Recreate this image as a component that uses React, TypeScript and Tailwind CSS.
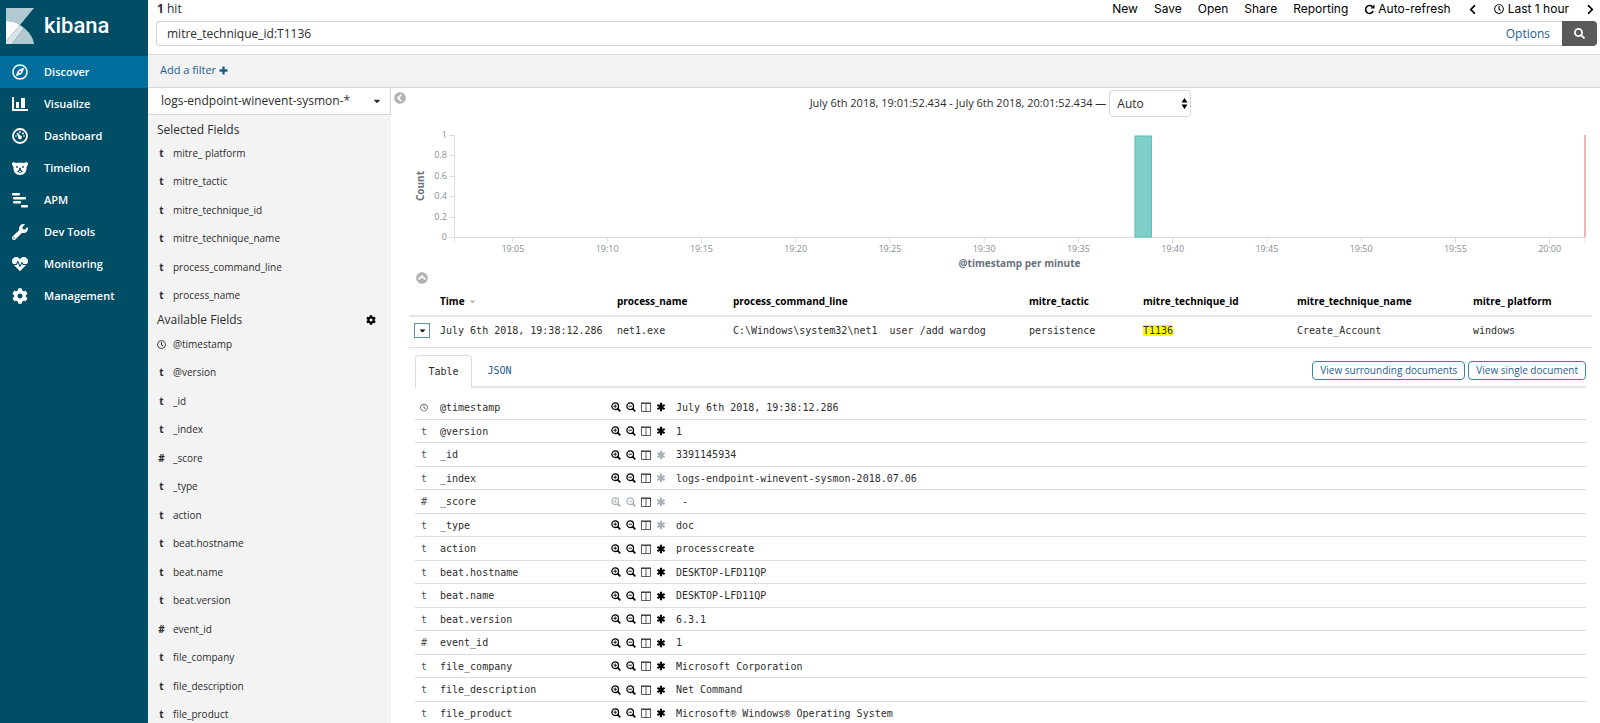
import { useState } from "react";
import type { ReactNode } from "react";
import {
  FaCaretDown,
  FaChevronCircleLeft,
  FaChevronCircleUp,
  FaChevronLeft,
  FaChevronRight,
  FaCog,
  FaHeartbeat,
  FaRegClock,
  FaRegCompass,
  FaSearch,
  FaWrench,
} from "react-icons/fa";

type Field = { type: string; name: string };
type DocRow = Field & { value: string; meta?: boolean; noFilter?: boolean };

const selectedFields: Field[] = [
  { type: "t", name: "mitre_ platform" },
  { type: "t", name: "mitre_tactic" },
  { type: "t", name: "mitre_technique_id" },
  { type: "t", name: "mitre_technique_name" },
  { type: "t", name: "process_command_line" },
  { type: "t", name: "process_name" },
];

const docRows: DocRow[] = [
  { type: "date", name: "@timestamp", value: "July 6th 2018, 19:38:12.286" },
  { type: "t", name: "@version", value: "1" },
  { type: "t", name: "_id", value: "3391145934", meta: true },
  { type: "t", name: "_index", value: "logs-endpoint-winevent-sysmon-2018.07.06", meta: true },
  { type: "#", name: "_score", value: " -", meta: true, noFilter: true },
  { type: "t", name: "_type", value: "doc", meta: true },
  { type: "t", name: "action", value: "processcreate" },
  { type: "t", name: "beat.hostname", value: "DESKTOP-LFD11QP" },
  { type: "t", name: "beat.name", value: "DESKTOP-LFD11QP" },
  { type: "t", name: "beat.version", value: "6.3.1" },
  { type: "#", name: "event_id", value: "1" },
  { type: "t", name: "file_company", value: "Microsoft Corporation" },
  { type: "t", name: "file_description", value: "Net Command" },
  { type: "t", name: "file_product", value: "Microsoft® Windows® Operating System" },
];

// chart range in minutes after 19:00
const RANGE_START = 1.874;
const RANGE_LENGTH = 60;
const xPos = (minute: number) => `${((minute - RANGE_START) / RANGE_LENGTH) * 100}%`;

const xTicks = [
  { minute: 5, label: "19:05" },
  { minute: 10, label: "19:10" },
  { minute: 15, label: "19:15" },
  { minute: 20, label: "19:20" },
  { minute: 25, label: "19:25" },
  { minute: 30, label: "19:30" },
  { minute: 35, label: "19:35" },
  { minute: 40, label: "19:40" },
  { minute: 45, label: "19:45" },
  { minute: 50, label: "19:50" },
  { minute: 55, label: "19:55" },
  { minute: 60, label: "20:00" },
];

const yTicks = [
  { y: 8, label: "1" },
  { y: 28, label: "0.8" },
  { y: 49, label: "0.6" },
  { y: 69, label: "0.4" },
  { y: 90, label: "0.2" },
  { y: 110, label: "0" },
];

function KibanaLogo() {
  return (
    <svg width="28" height="36" viewBox="0 0 28 36" aria-hidden="true">
      <path d="M0 0H28L14 17C10 14 5 13 0 13Z" fill="#b2c9d1" />
      <path d="M0 13C5 13 10 14 14 17L0 33Z" fill="#fff" />
      <path d="M14 17L18 20L6 36H0V33Z" fill="#d9e4e8" />
      <path d="M18 20C23 24 27 29 28 36H6Z" fill="#b2c9d1" />
    </svg>
  );
}

function BarsIcon() {
  return (
    <svg width="16" height="15" viewBox="0 0 16 15" fill="currentColor" aria-hidden="true">
      <path d="M0 0H2V12H16V14H0Z" />
      <path d="M4 5H7V11H4ZM9 1H13V11H9Z" />
    </svg>
  );
}

function GaugeIcon() {
  return (
    <svg width="16" height="16" viewBox="0 0 16 16" aria-hidden="true">
      <circle cx="8" cy="8" r="7" fill="none" stroke="currentColor" strokeWidth="1.800" />
      <g fill="currentColor">
        <circle cx="8" cy="9.500" r="1.900" />
        <path d="M4.500 5.500L6 4.500L9 9L7 10Z" />
        <circle cx="8" cy="4" r=".9" />
        <circle cx="11" cy="5.500" r="1" />
        <circle cx="4" cy="8" r=".8" />
        <circle cx="12" cy="8" r=".8" />
      </g>
    </svg>
  );
}

function BearIcon() {
  return (
    <svg width="16" height="13" viewBox="0 0 16 13" aria-hidden="true">
      <path
        d="M0 2C0 0 2 0 4 1C6 .5 10 .5 12 1C14 0 16 0 16 2C16 3 15 4 14.500 5C15 10 12 13 8 13C4 13 1 10 1.500 5C1 4 0 3 0 2Z"
        fill="currentColor"
      />
      <g fill="#004d66">
        <circle cx="5" cy="5" r=".9" />
        <circle cx="11" cy="5" r=".9" />
        <path d="M8 5.500C9 5.500 9 7 9 8L11 9.500C10 11 6 11 5 9.500L7 8C7 7 7 5.500 8 5.500Z" />
      </g>
      <rect x="7" y="9" width="2" height="1" fill="currentColor" />
    </svg>
  );
}

function ApmIcon() {
  return (
    <svg width="16" height="15" viewBox="0 0 16 15" fill="currentColor" aria-hidden="true">
      <rect x="0" y="0" width="8" height="2.400" rx="1" />
      <rect x="1" y="4" width="13" height="2.400" rx="1" />
      <rect x="1" y="8" width="8" height="2.400" rx="1" />
      <rect x="9" y="12" width="7" height="2.400" rx="1" />
    </svg>
  );
}

function RepeatIcon() {
  return (
    <svg width="11" height="11" viewBox="0 0 11 11" aria-hidden="true">
      <path d="M8.500 2.700A4 4 0 1 0 9.200 7.200" fill="none" stroke="currentColor" strokeWidth="1.600" />
      <path d="M10.500 .5V4.500H6.500Z" fill="currentColor" />
    </svg>
  );
}

function PlusIcon() {
  return (
    <svg width="9" height="9" viewBox="0 0 9 9" aria-hidden="true">
      <path d="M4.500 .5V8.500M.5 4.500H8.500" stroke="currentColor" strokeWidth="2.400" />
    </svg>
  );
}

function AsteriskIcon() {
  return (
    <svg width="10" height="10" viewBox="0 0 10 10" aria-hidden="true">
      <path
        d="M5 .8V9.200M1.400 2.900L8.600 7.100M8.600 2.900L1.400 7.100"
        stroke="currentColor"
        strokeWidth="2.200"
      />
    </svg>
  );
}

function ZoomIcon({ plus }: { plus?: boolean }) {
  return (
    <svg width="10" height="10" viewBox="0 0 10 10" fill="none" stroke="currentColor" aria-hidden="true">
      <circle cx="4.200" cy="4.200" r="3.300" strokeWidth="1.300" />
      <path d="M6.600 6.600L9.300 9.300" strokeWidth="1.700" />
      <path d={plus ? "M2.500 4.200H5.900M4.200 2.500V5.900" : "M2.500 4.200H5.900"} strokeWidth=".9" />
    </svg>
  );
}

function ColumnsIcon() {
  return (
    <svg width="10" height="10" viewBox="0 0 10 10" fill="none" stroke="currentColor" aria-hidden="true">
      <path d="M.5 1V9.500H9.500V1M5 1V9.500" strokeWidth=".8" />
      <path d="M0 1.200H10" strokeWidth="1.400" />
    </svg>
  );
}

const navItems: { label: string; icon: ReactNode }[] = [
  { label: "Discover", icon: <FaRegCompass size={16} /> },
  { label: "Visualize", icon: <BarsIcon /> },
  { label: "Dashboard", icon: <GaugeIcon /> },
  { label: "Timelion", icon: <BearIcon /> },
  { label: "APM", icon: <ApmIcon /> },
  { label: "Dev Tools", icon: <FaWrench size={16} /> },
  { label: "Monitoring", icon: <FaHeartbeat size={16} /> },
  { label: "Management", icon: <FaCog size={16} /> },
];

function SideNav() {
  return (
    <nav className="w-[148px] shrink-0 bg-[#004d66] text-white">
      <a href="#home" className="flex h-14 items-center gap-[10px] pl-[6px] pb-1">
        <KibanaLogo />
        <span className="font-[Roboto,sans-serif] text-[22px] leading-6 font-medium">kibana</span>
      </a>
      <ul>
        {navItems.map((item, i) => (
          <li key={item.label}>
            <a
              href={`#${item.label}`}
              className={`flex h-8 items-center pl-3 text-[11px] font-semibold ${i === 0 ? "bg-[#006e9c]" : ""}`}
            >
              <span className="w-8">{item.icon}</span>
              {item.label}
            </a>
          </li>
        ))}
      </ul>
    </nav>
  );
}

function TopBar() {
  const [query, setQuery] = useState("mitre_technique_id:T1136");

  return (
    <header className="border-b border-[#d9d9d9] pb-2">
      <div className="flex h-[21px] items-center justify-between pb-[3px] pl-[9px] pr-1">
        <div className="text-xs">
          <strong>1</strong> hit
        </div>
        <div className="flex items-center gap-4 font-[Inter,sans-serif] text-xs leading-4 text-black">
          <button>New</button>
          <button>Save</button>
          <button>Open</button>
          <button>Share</button>
          <button>Reporting</button>
          <button className="flex items-center gap-[3px]">
            <RepeatIcon />
            Auto-refresh
          </button>
          <button aria-label="Previous period">
            <FaChevronLeft size={11} />
          </button>
          <button className="flex items-center gap-1">
            <FaRegClock size={10} />
            Last 1 hour
          </button>
          <button aria-label="Next period">
            <FaChevronRight size={11} />
          </button>
        </div>
      </div>
      <form className="flex h-[25px] pl-2 pr-[3px]" onSubmit={(e) => e.preventDefault()}>
        <div className="flex flex-1 items-center rounded-l border border-r-0 border-[#d4d4d4] pr-3">
          <input
            type="text"
            aria-label="Search query"
            value={query}
            onChange={(e) => setQuery(e.target.value)}
            className="min-w-0 flex-1 pl-[10px] text-xs text-[#2d2d2d] outline-none"
          />
          <a href="#options" className="text-xs text-[#1f5d8f]">
            Options
          </a>
        </div>
        <button
          aria-label="Search"
          className="flex w-[35px] items-center justify-center rounded-r bg-[#5a5a5a] text-white"
        >
          <FaSearch size={11} />
        </button>
      </form>
    </header>
  );
}

function FieldIcon({ type }: { type: string }) {
  return type === "date" ? <FaRegClock size={9} /> : <>{type}</>;
}

function FieldList({ fields }: { fields: Field[] }) {
  return (
    <ul className="text-[10px] text-[#2d2d2d]">
      {fields.map((field) => (
        <li key={field.name} className="flex items-center odd:h-7 even:h-[29px]">
          <span className="flex w-[9px] justify-center font-bold">
            <FieldIcon type={field.type} />
          </span>
          <span className="pl-[7px]">{field.name}</span>
        </li>
      ))}
    </ul>
  );
}

function FieldsPanel() {
  return (
    <aside className="w-[243px] shrink-0 bg-[#f3f3f3]">
      <button className="flex h-[27px] w-full items-center justify-between border-r border-b border-[#d4d4d4] bg-white pl-[13px] pr-2 text-xs">
        logs-endpoint-winevent-sysmon-*
        <FaCaretDown size={10} />
      </button>
      <div className="pl-[9px] pt-[5px]">
        <h2 className="h-[19px] text-xs leading-5">Selected Fields</h2>
        <FieldList fields={selectedFields} />
        <div className="flex h-5 items-center justify-between pr-[15px]">
          <h2 className="text-xs">Available Fields</h2>
          <button aria-label="Field settings" className="text-black">
            <FaCog size={10} />
          </button>
        </div>
        <FieldList fields={docRows} />
      </div>
    </aside>
  );
}

function Histogram() {
  return (
    <div className="flex h-[145px] pr-[7px] font-['Open_Sans',sans-serif]">
      <svg className="h-full w-[45px] shrink-0" aria-hidden="true">
        <text x="15" y="59" transform="rotate(-90 15 59)" textAnchor="middle" className="fill-[#69707d] text-[10px] font-bold">
          Count
        </text>
        {yTicks.map((tick) => (
          <g key={tick.label}>
            <text x="38" y={tick.y + 3} textAnchor="end" className="fill-[#848e96] text-[9px]">
              {tick.label}
            </text>
            <path d={`M40 ${tick.y}.5H45`} stroke="#ddd" />
          </g>
        ))}
      </svg>
      <svg className="h-full min-w-0 flex-1 overflow-visible" role="img" aria-label="Count by @timestamp per minute">
        <path d="M.5 8V116" stroke="#ddd" />
        <line x1="0" x2="100%" y1="110.5" y2="110.5" stroke="#ddd" />
        <line x1="100%" x2="100%" y1="110" y2="116" stroke="#ddd" />
        {xTicks.map((tick) => (
          <g key={tick.minute}>
            <line x1={xPos(tick.minute)} x2={xPos(tick.minute)} y1="110" y2="116" stroke="#ddd" />
            <text x={xPos(tick.minute)} y="125" textAnchor="middle" className="fill-[#848e96] text-[9px]">
              {tick.label}
            </text>
          </g>
        ))}
        <rect x={xPos(38)} y="9" width="1.45%" height="101" fill="#80cfc9" stroke="#4dbfb6" />
        <line x1="100%" x2="100%" y1="8" y2="110" stroke="#f3b6b6" strokeWidth="2" />
        <text x="50%" y="140" textAnchor="middle" className="fill-[#69707d] text-[10px] font-bold">
          @timestamp per minute
        </text>
      </svg>
    </div>
  );
}

function DocTable() {
  return (
    <table className="w-full table-fixed text-left">
      <colgroup>
        <col className="w-[31px]" />
        <col className="w-[177px]" />
        <col className="w-[116px]" />
        <col />
        <col className="w-[114px]" />
        <col className="w-[154px]" />
        <col className="w-[176px]" />
        <col className="w-[119px]" />
      </colgroup>
      <thead>
        <tr className="h-7 border-b-2 border-[#e6e6e6] text-[10px] text-black">
          <th aria-label="Toggle" />
          <th>
            <span className="flex items-center gap-[3px]">
              Time <FaCaretDown size={9} className="text-[#b0b8be]" />
            </span>
          </th>
          <th>process_name</th>
          <th>process_command_line</th>
          <th>mitre_tactic</th>
          <th>mitre_technique_id</th>
          <th>mitre_technique_name</th>
          <th>mitre_ platform</th>
        </tr>
      </thead>
      <tbody>
        <tr className="h-[31px] border-b border-[#dcdcdc] font-['DejaVu_Sans_Mono',monospace] text-[10px] text-[#2d2d2d] *:pb-[3px]">
          <td className="pl-[5px]">
            <button
              aria-label="Toggle row details"
              className="flex h-[15px] w-4 items-center justify-center border border-[#5a8db5] text-black"
            >
              <FaCaretDown size={9} />
            </button>
          </td>
          <td>July 6th 2018, 19:38:12.286</td>
          <td>net1.exe</td>
          <td className="whitespace-pre">{"C:\\Windows\\system32\\net1  user /add wardog"}</td>
          <td>persistence</td>
          <td>
            <mark className="bg-[#ff0] text-[#2d2d2d]">T1136</mark>
          </td>
          <td>Create_Account</td>
          <td>windows</td>
        </tr>
      </tbody>
    </table>
  );
}

function DocDetails() {
  return (
    <section className="pl-[6px] pr-[6px] pt-[7px] font-['DejaVu_Sans_Mono',monospace] text-[10px]">
      <div className="flex h-[33px] justify-between border-b-2 border-[#e6e6e6]">
        <div className="flex" role="tablist">
          <button
            role="tab"
            aria-selected="true"
            className="-mb-[2px] w-[57px] rounded-t border border-b-0 border-[#dcdcdc] bg-white"
          >
            Table
          </button>
          <button role="tab" aria-selected="false" className="w-[55px] text-[#1f5d8f]">
            JSON
          </button>
        </div>
        <div className="flex items-center gap-[3px] font-['Open_Sans',sans-serif] text-[10px] text-[#1f5d8f]">
          <a href="#surrounding" className="rounded border border-[#3c82a8] px-[7px] leading-[17px]">
            View surrounding documents
          </a>
          <a href="#single" className="rounded border border-[#3c82a8] px-[7px] leading-[17px]">
            View single document
          </a>
        </div>
      </div>
      <table className="mt-2 w-full table-fixed">
        <colgroup>
          <col className="w-[25px]" />
          <col className="w-[171px]" />
          <col className="w-[65px]" />
          <col />
        </colgroup>
        <tbody>
          {docRows.map((row) => (
            <tr key={row.name} className="border-b border-[#dcdcdc] odd:h-6 even:h-[23px]">
              <td className="pl-[5px]">
                <span className="flex w-2 justify-center text-[#555]">
                  <FieldIcon type={row.type} />
                </span>
              </td>
              <td>{row.name}</td>
              <td>
                <span className="flex items-center gap-[5px] text-black">
                  <button aria-label="Filter for value" disabled={row.noFilter} className="disabled:text-[#a9b1b8]">
                    <ZoomIcon plus />
                  </button>
                  <button aria-label="Filter out value" disabled={row.noFilter} className="disabled:text-[#a9b1b8]">
                    <ZoomIcon />
                  </button>
                  <button aria-label="Toggle column in table" className="text-[#333]">
                    <ColumnsIcon />
                  </button>
                  <button aria-label="Filter for field present" disabled={row.meta} className="disabled:text-[#a9b1b8]">
                    <AsteriskIcon />
                  </button>
                </span>
              </td>
              <td className="whitespace-pre">{row.value}</td>
            </tr>
          ))}
        </tbody>
      </table>
    </section>
  );
}

export default function App() {
  return (
    <div className="flex h-screen overflow-hidden bg-white font-['Open_Sans',sans-serif] text-[#2d2d2d]">
      <SideNav />
      <div className="flex min-w-0 flex-1 flex-col">
        <TopBar />
        <div className="flex h-[33px] shrink-0 items-center border-b border-[#d4d4d4] bg-[#f3f3f3] pb-[2px] pl-3">
          <a href="#filter" className="flex items-center gap-[3px] text-[11px] text-[#1f5d8f]">
            Add a filter <PlusIcon />
          </a>
        </div>
        <div className="flex min-h-0 flex-1">
          <FieldsPanel />
          <button aria-label="Collapse fields" className="ml-[3px] mt-1 self-start text-[#b3b3b3]">
            <FaChevronCircleLeft size={12} />
          </button>
          <main className="min-w-0 flex-1 pl-[3px] pr-2">
            <div className="flex h-[39px] items-center justify-center gap-[3px] pb-[10px] pt-[2px] text-[11px]">
              <label htmlFor="interval">July 6th 2018, 19:01:52.434 - July 6th 2018, 20:01:52.434 —</label>
              <span className="relative">
                <select
                  id="interval"
                  className="h-[27px] w-[82px] appearance-none rounded border border-[#d9d9d9] bg-white pl-[7px] text-xs"
                >
                  <option>Auto</option>
                </select>
                <svg
                  className="pointer-events-none absolute right-[3px] top-2 text-black"
                  width="7"
                  height="11"
                  viewBox="0 0 7 11"
                  fill="currentColor"
                  aria-hidden="true"
                >
                  <path d="M3.500 0L6.500 4.500H.5ZM3.500 11L.5 6.500H6.500Z" />
                </svg>
              </span>
            </div>
            <Histogram />
            <button aria-label="Collapse chart" className="ml-[7px] block text-[#b3b3b3]">
              <FaChevronCircleUp size={12} />
            </button>
            <div className="mt-1">
              <DocTable />
              <DocDetails />
            </div>
          </main>
        </div>
      </div>
    </div>
  );
}
